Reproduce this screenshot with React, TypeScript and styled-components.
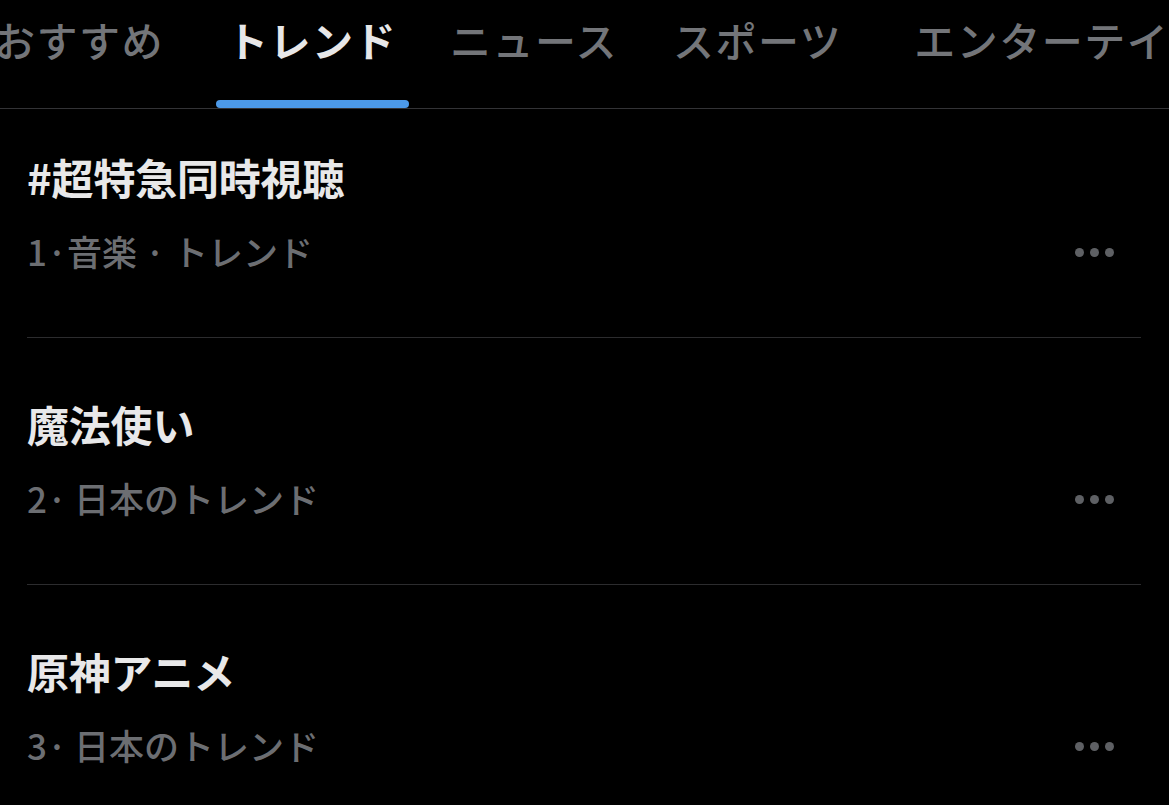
import React from "react";
import styled, { createGlobalStyle } from "styled-components";

const Global = createGlobalStyle`
  html, body { margin: 0; padding: 0; background: #000; }
  body {
    font-family: "Noto Sans CJK JP", "Noto Sans", sans-serif;
    width: 1169px;
    height: 805px;
    overflow: hidden;
  }
`;

const Page = styled.div`
  width: 1169px;
  height: 805px;
  background: #000;
  overflow: hidden;
`;

const TabBar = styled.nav`
  display: flex;
  height: 108px;
  border-bottom: 1px solid #333336;
  white-space: nowrap;
  overflow: hidden;
`;

const Tab = styled.div<{ $ml: number; $active?: boolean }>`
  position: relative;
  flex: none;
  margin-left: ${(p) => p.$ml}px;
  padding-top: 13px;
  height: 100%;
  box-sizing: border-box;
  font-size: 41px;
  line-height: 52px;
  letter-spacing: 1.5px;
  font-weight: ${(p) => (p.$active ? 700 : 500)};
  color: ${(p) => (p.$active ? "#e7e7e8" : "#737579")};
`;

const Indicator = styled.span`
  position: absolute;
  left: -11px;
  right: -12px;
  bottom: 0;
  height: 8px;
  border-radius: 4px;
  background: #4c99e8;
`;

const List = styled.div`
  display: flex;
  flex-direction: column;
`;

const Item = styled.div`
  padding: 61px 28px 0 27px;
  &:first-child {
    padding-top: 43px;
  }
`;

const Title = styled.div`
  font-size: 42px;
  line-height: 50px;
  font-weight: 700;
  color: #e8e8e9;
  letter-spacing: -0.2px;
`;

const MetaRow = styled.div`
  display: flex;
  align-items: center;
  justify-content: space-between;
  margin-top: 27px;
  height: 44px;
`;

const Meta = styled.div`
  font-size: 35px;
  line-height: 44px;
  font-weight: 500;
  color: #6c6e72;
`;

const More = styled.div`
  display: flex;
  gap: 6px;
  padding-right: 27px;
  margin-top: 2px;
`;

const Dot = styled.span`
  width: 9px;
  height: 9px;
  border-radius: 50%;
  background: #5e6064;
`;

const Divider = styled.div`
  height: 1px;
  background: #2c2c2e;
  margin-top: 64px;
`;

const tabs = [
  { label: "おすすめ", ml: -6 },
  { label: "トレンド", ml: 63 },
  { label: "ニュース", ml: 53 },
  { label: "スポーツ", ml: 55 },
  { label: "エンターテイメント", ml: 72 },
];

const trends = [
  { title: "#超特急同時視聴", meta: "1·音楽 · トレンド" },
  { title: "魔法使い", meta: "2·\u2009日本のトレンド" },
  { title: "原神アニメ", meta: "3·\u2009日本のトレンド" },
];

export default function App() {
  return (
    <Page>
      <Global />
      <TabBar>
        {tabs.map((t, i) => (
          <Tab key={t.label} $ml={t.ml} $active={i === 1}>
            {t.label}
            {i === 1 && <Indicator />}
          </Tab>
        ))}
      </TabBar>
      <List>
        {trends.map((t, i) => (
          <Item key={t.title}>
            <Title>{t.title}</Title>
            <MetaRow>
              <Meta>{t.meta}</Meta>
              <More>
                <Dot />
                <Dot />
                <Dot />
              </More>
            </MetaRow>
            {i < trends.length - 1 && <Divider />}
          </Item>
        ))}
      </List>
    </Page>
  );
}
